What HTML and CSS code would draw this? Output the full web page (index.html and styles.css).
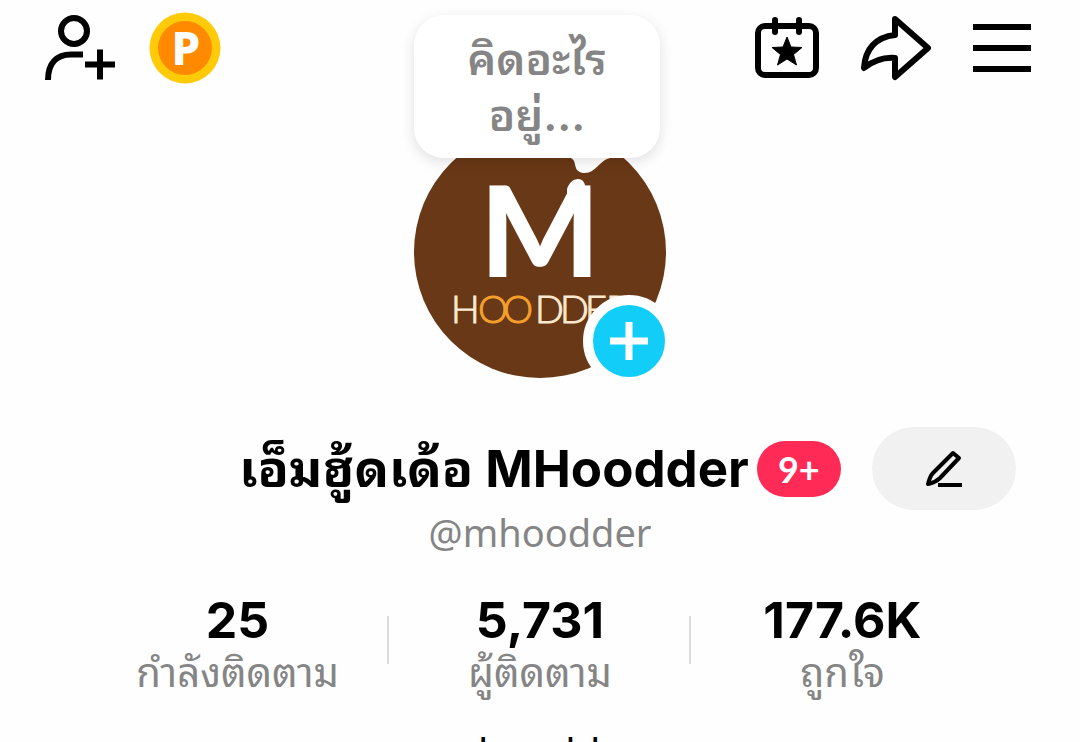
FILE: index.html
```html
<!DOCTYPE html>
<html lang="th">
    <head>
        <meta charset="utf-8">
        <meta name="viewport" content="width=device-width, initial-scale=1">
        <title>MHoodder</title>
        <link rel="stylesheet" href="styles.css">
    </head>
    <body>
        <header class="top">
            <nav class="actions">
                <button class="icon-btn" aria-label="Add friends">
                    <svg width="70" height="68" viewBox="1 0 70 68" fill="none" stroke="#000" stroke-width="6">
                        <circle cx="30" cy="17" r="13"/>
                        <path d="M4 66C4 49 13 40.500 27 40.500H39M41 50.500H71M56 35.500V65.500"/>
                    </svg>
                </button>
                <button class="icon-btn" aria-label="Coins">
                    <svg width="72" height="72" viewBox="0 0 72 72">
                        <circle cx="36" cy="36" r="35.500" fill="#ffcb08"/>
                        <circle cx="36" cy="36" r="27" fill="#ff8a00"/>
                        <text class="coin-letter" x="37" y="53" text-anchor="middle">P</text>
                    </svg>
                </button>
            </nav>

            <div class="profile">
                <button class="bubble">คิดอะไร<br>อยู่...</button>
                <div class="avatar">
                    <svg class="logo" viewBox="0 0 252 252">
                        <circle cx="126" cy="126" r="126" fill="#693816"/>
                        <text class="logo-m" x="126" y="151" text-anchor="middle">M</text>
                        <path d="M153 63C155 57 159 53 164 53S171 57 172 63V70H153Z" fill="#fdfdfd"/>
                        <path d="M150 31C161 31 160 35 162 42C164 48 173 48 178 45C187 39 188 32 202 31V26H150Z" fill="#fff"/>
                        <text class="logo-word" y="197"><tspan x="37">H</tspan><tspan class="logo-o" x="64 89">OO</tspan><tspan x="121 146 171 192">DDER</tspan></text>
                    </svg>
                    <button class="add" aria-label="Add story">
                        <svg width="38" height="38" viewBox="0 0 38 38" stroke="#fff" stroke-width="7">
                            <path d="M0 19H38M19 0V38"/>
                        </svg>
                    </button>
                </div>
            </div>

            <nav class="actions actions-right">
                <button class="icon-btn" aria-label="Events">
                    <svg width="64" height="62" viewBox="0 0 64 62">
                        <rect x="3" y="9" width="58" height="49" rx="7" fill="none" stroke="#000" stroke-width="6"/>
                        <path d="M20 3V15M44 3V15" stroke="#000" stroke-width="6" stroke-linecap="round"/>
                        <path d="M32 20L36 30L47 30.500L38.500 37.500L41.500 48L32 42L22.500 48L25.500 37.500L17 30.500L28 30Z" stroke="#000" stroke-linejoin="round"/>
                    </svg>
                </button>
                <button class="icon-btn" aria-label="Share">
                    <svg width="70" height="66" viewBox="0 0 70 66" fill="none" stroke="#000" stroke-width="6" stroke-linejoin="round">
                        <path d="M34 4L67 33L34 62V43C22 42 12 46 3 53C4 34 15 22 34 20Z"/>
                    </svg>
                </button>
                <button class="icon-btn" aria-label="Menu">
                    <svg width="58" height="50" viewBox="0 0 58 50" stroke="#000" stroke-width="6">
                        <path d="M0 4H58M0 25H58M0 46H58"/>
                    </svg>
                </button>
            </nav>
        </header>

        <main>
            <div class="name-row">
                <h1>เอ็มฮู้ดเด้อ MHoodder</h1>
                <span class="badge">9+</span>
                <button class="edit" aria-label="Edit profile">
                    <svg width="38" height="38" viewBox="0 0 38 38" fill="none" stroke="#000" stroke-width="4" stroke-linejoin="round">
                        <path d="M28 3L34 8L15 28C12 31 8 33 3 34C4 30 5 26 8 23Z"/>
                        <path d="M13 35H37"/>
                    </svg>
                </button>
            </div>
            <p class="handle">@mhoodder</p>

            <div class="stats">
                <a class="stat" href="#"><strong>25</strong><span>กำลังติดตาม</span></a>
                <a class="stat" href="#"><strong>5,731</strong><span>ผู้ติดตาม</span></a>
                <a class="stat" href="#"><strong>177.6K</strong><span>ถูกใจ</span></a>
            </div>

            <p class="bio">mhoodder</p>
        </main>
    </body>
</html>
```

FILE: styles.css
```css
* {
    box-sizing: border-box;
}

body {
    margin: 0;
    height: 100vh;
    overflow: hidden;
    background-color: #fefefe;
    color: #000;
    font-family: Inter, "Noto Sans Thai Looped", Loma, Waree, "Noto Sans Thai", "Noto Sans", sans-serif;
}

button {
    margin: 0;
    padding: 0;
    border: none;
    background: none;
    font-family: inherit;
    cursor: pointer;
}

svg {
    display: block;
}

p, h1 {
    margin: 0;
}

.top {
    display: grid;
    grid-template-columns: 1fr auto 1fr;
    align-items: start;
    padding: 12px 45px 0;
}

.actions {
    display: flex;
    align-items: center;
    gap: 34px;
    height: 72px;
}

.actions-right {
    justify-content: flex-end;
    gap: 42px;
    padding-right: 4px;
}

.profile {
    width: 252px;
    padding-top: 3px;
}

.bubble {
    position: relative;
    z-index: 1;
    display: block;
    width: 246px;
    height: 143px;
    border-radius: 30px;
    background-color: #fff;
    box-shadow: 0 4px 14px rgba(0, 0, 0, 0.12);
    color: #858585;
    font-size: 44px;
    font-weight: 600;
    line-height: 56px;
}

.avatar {
    position: relative;
    height: 252px;
    margin-top: -32px;
}

.logo-m {
    fill: #fff;
    font-family: Lato, sans-serif;
    font-size: 126px;
    font-weight: 900;
}

.logo-word {
    fill: #fbe9d0;
    stroke: #fbe9d0;
    font-family: Lato, sans-serif;
    font-size: 38px;
    font-weight: 300;
}

.logo-o {
    fill: #f5a02c;
    stroke: #f5a02c;
}

.coin-letter {
    fill: #fff;
    font-family: "Noto Sans", sans-serif;
    font-size: 46px;
    font-weight: 800;
}

.add {
    position: absolute;
    right: -9px;
    bottom: -9px;
    display: flex;
    align-items: center;
    justify-content: center;
    width: 92px;
    height: 92px;
    border: 10px solid #fefefe;
    border-radius: 50%;
    background-color: #12cdf7;
}

.name-row {
    display: grid;
    grid-template-columns: 1fr auto auto 1fr;
    align-items: center;
    margin-top: 49px;
}

.name-row h1 {
    grid-column: 2;
    font-size: 51px;
    font-weight: 700;
    line-height: 83px;
    white-space: nowrap;
}

.badge {
    width: 84px;
    margin-left: 8px;
    border-radius: 28px;
    background-color: #ff2b56;
    color: #fff;
    font-family: Lato, sans-serif;
    font-size: 36px;
    font-weight: 700;
    line-height: 56px;
    text-align: center;
}

.edit {
    display: flex;
    align-items: center;
    justify-content: center;
    width: 144px;
    height: 83px;
    margin-left: 31px;
    border-radius: 42px;
    background-color: #f1f1f1;
}

.handle {
    color: #858585;
    font-family: "Noto Sans", sans-serif;
    font-size: 38px;
    line-height: 44px;
    text-align: center;
}

.stats {
    display: flex;
    margin-top: 40px;
    padding: 0 8%;
}

.stat {
    display: flex;
    flex: 1;
    flex-direction: column;
    align-items: center;
    color: inherit;
    text-decoration: none;
    background: linear-gradient(#dcdcdc, #dcdcdc) no-repeat right 22px / 2px 48px;
}

.stat:last-child {
    background: none;
}

.stat strong {
    font-size: 50px;
    font-weight: 700;
    line-height: 52px;
}

.stat span {
    color: #858585;
    font-size: 40px;
    line-height: 54px;
}

.bio {
    margin-top: 30px;
    font-family: "Noto Sans", sans-serif;
    font-size: 40px;
    line-height: 44px;
    text-align: center;
}
```
